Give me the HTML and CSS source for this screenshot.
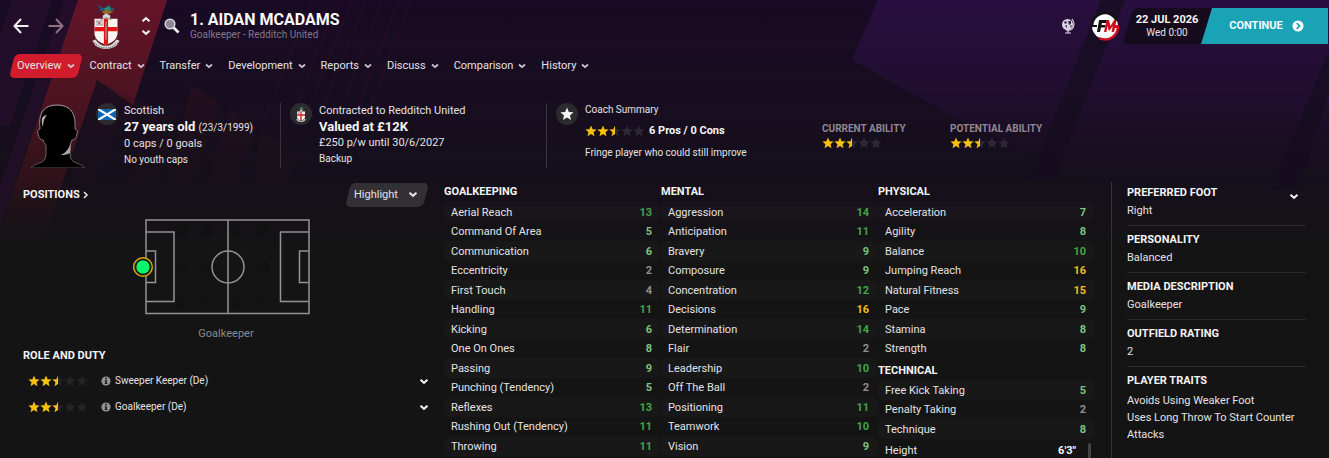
FILE: index.html
```
<!DOCTYPE html>
<html lang="en">
<head>
	<meta charset="UTF-8">
	<title>Aidan McAdams - Overview</title>
	<link rel="stylesheet" href="styles.css">
</head>
<body>

	<!-- shared icons -->
	<svg class="defs" aria-hidden="true">
		<symbol id="ic-chevron" viewBox="0 0 8 6"><path d="M1 1.5l3 2.6 3-2.6" fill="none" stroke="currentColor" stroke-width="1.8"/></symbol>
		<symbol id="ic-info" viewBox="0 0 10 10"><circle cx="5" cy="5" r="4.6" fill="#929292"/><path d="M4.2 1.8h1.6v1.4H4.2zM3.8 4.2h2v3h.6v.9H3.7v-.9h.5V5h-.4z" fill="#141414"/></symbol>
		<symbol id="ic-star" viewBox="0 0 24 24"><path d="M12 1l3.2 7.4 8 .7-6.1 5.3 1.9 7.9L12 18.1l-7 4.2 1.9-7.9L.8 9.1l8-.7z"/></symbol>
		<symbol id="rating" viewBox="0 0 60 12">
			<g fill="#f5c010"><use href="#ic-star" x="0" width="12" height="12"/><use href="#ic-star" x="12" width="12" height="12"/></g>
			<g fill="currentColor"><use href="#ic-star" x="24" width="12" height="12"/><use href="#ic-star" x="36" width="12" height="12"/><use href="#ic-star" x="48" width="12" height="12"/></g>
			<path d="M30 .5v8.6l-3.5 2.1 1-4-3.1-2.6 4-.4z" fill="#f5c010"/>
		</symbol>
		<symbol id="crest" viewBox="0 0 26 44">
			<path d="M4 1l5 3 4 1 3-4 2 4 5-1-6 4-3 2-4-2-5-1 3-1z" fill="#20547c"/>
			<path d="M11 5l5-2 2 3-4 3z" fill="#258b72"/><path d="M9 9l4-3 3 2 5-1-4 3-4 1z" fill="#9b6a25"/>
			<path d="M10 12l3-2 4 2v3h-7z" fill="#d6d6d6"/>
			<path d="M2 15h22v15q-1 7-11 10Q3 37 2 30z" fill="#f7f4f2"/>
			<path d="M11 15h4v25h-4zM2 23h22v4H2z" fill="#e41516"/>
			<path d="M3 16h8v6H3z" fill="#d5cdce"/><path d="M4 17l5 4M8 17l-3 4" stroke="#79616a" stroke-width=".8"/>
			<path d="M13 18v17M8 16l5-2 5 2" fill="none" stroke="#999" stroke-width="1.2"/>
			<path d="M0 36l3-1q4 6 10 6t10-6l3 1-3 5q-4 3-10 3T3 41z" fill="#d8d8d8"/>
			<path d="M2 38q4 5 11 5t11-5" fill="none" stroke="#555" stroke-width="1" stroke-dasharray="1 1"/>
		</symbol>
	</svg>

	<!-- backdrop -->
	<svg class="backdrop" viewBox="0 0 1329 260" preserveAspectRatio="none" aria-hidden="true">
		<defs>
			<linearGradient id="red" gradientUnits="userSpaceOnUse" x1="0" y1="0" x2="0" y2="255"><stop stop-color="#651429"/><stop offset=".4" stop-color="#4c1321"/><stop offset=".7" stop-color="#2f1219"/><stop offset="1" stop-color="#141414" stop-opacity="0"/></linearGradient>
			<linearGradient id="purple" gradientUnits="userSpaceOnUse" x1="0" y1="0" x2="0" y2="200"><stop stop-color="#280e3e"/><stop offset=".5" stop-color="#200e2e"/><stop offset="1" stop-color="#160f1c" stop-opacity="0"/></linearGradient>
			<linearGradient id="dim" gradientUnits="userSpaceOnUse" x1="0" y1="60" x2="0" y2="235"><stop stop-color="#37101f"/><stop offset="1" stop-color="#141414" stop-opacity="0"/></linearGradient>
		</defs>
		<path d="M12 0h40L10 126H0V36zM64 0h14L0 225v-40z" fill="#2b1031" opacity=".5"/>
		<path d="M78 0h89l-34 105-36-25L40 250H0v-20z" fill="url(#red)"/>
		<path d="M97 80l80 40-38 118h-30l35-105-24-12-38 100H58z" fill="url(#dim)" opacity=".4"/>
		<path d="M192 85l28 19-42 130h-30zM230 108l26 19-34 107h-30zM262 130l34 24-25 80h-30z" fill="url(#dim)" opacity=".6"/>
		<path d="M312 0l-48 120M338 0l-48 120M352 0l-44 110M366 0l-44 110M382 0l-42 110M399 0l-42 110M411 0l-42 110" stroke="#5a1534" stroke-width="1" opacity=".35" fill="none"/>
		<path d="M878 0h451v190h-230L960 120l-108-60z" fill="url(#purple)"/>
		<path d="M1101 0h24l-72 180h-24zM1329 50v42l-32 98h-26z" fill="#160d20" opacity=".75"/>
	</svg>

	<header class="header">
		<div class="header-nav">
			<button type="button" class="btn-icon" aria-label="Back"><svg width="16" height="16" viewBox="0 0 16 16"><path d="M15.500 8H1.500M8 1L1.500 8 8 15" fill="none" stroke="#f2eef2" stroke-width="2"/></svg></button>
			<button type="button" class="btn-icon" aria-label="Forward"><svg width="16" height="16" viewBox="0 0 16 16"><path d="M.5 8h14M8 1l6.500 7L8 15" fill="none" stroke="#8d7284" stroke-width="2"/></svg></button>
		</div>
		<svg class="header-crest"><use href="#crest"/></svg>
		<div class="header-step">
			<button type="button" class="btn-icon" aria-label="Previous player"><svg class="flip" width="10" height="7"><use href="#ic-chevron"/></svg></button>
			<button type="button" class="btn-icon" aria-label="Next player"><svg width="10" height="7"><use href="#ic-chevron"/></svg></button>
		</div>
		<button type="button" class="btn-icon header-search" aria-label="Search"><svg width="16" height="16" viewBox="0 0 16 16"><path d="M9.500 9.500l5 5" stroke="#f4f4f4" stroke-width="2.600"/><circle cx="6" cy="6" r="4.800" fill="#8b8794" stroke="#d8d5dc" stroke-width="1.500"/></svg></button>
		<div class="header-title">
			<h1>1. AIDAN MCADAMS</h1>
			<p>Goalkeeper - Redditch United</p>
		</div>
		<div class="header-tools">
			<button type="button" class="btn-icon" aria-label="World"><svg width="14" height="16" viewBox="0 0 14 16"><circle cx="6.500" cy="6.500" r="5.500" fill="#d9d5df"/><path d="M3 4l2-1 1 2-2 1zM7 3h3v3L8 7zM4 8l2-1v3zM9 8l2-1-1 3z" fill="#3a2850"/><path d="M11 1q4 5 0 10-3 2-6 1M7 12v3M4 15h6" fill="none" stroke="#d9d5df" stroke-width="1.200"/></svg></button>
			<button type="button" class="btn-icon" aria-label="FM menu"><svg width="30" height="30" viewBox="0 0 30 30">
				<circle cx="15" cy="15" r="13" fill="#fff"/>
				<path d="M2 15A13 13 0 0 1 27 10" fill="none" stroke="#111" stroke-width="2.500"/>
				<path d="M28 15A13 13 0 0 1 9 27" fill="none" stroke="#d0101e" stroke-width="2.500"/>
				<path d="M1 15h6" stroke="#111" stroke-width="2"/><path d="M7 21L9 9h8l-1 3h-4l-.5 2h4l-.5 2.500h-4L10 21z" fill="#111"/>
				<path d="M14 21l2.500-12H19l1.500 6L24 9h2.500l-1 5H29v3h-4l-1 4h-2.500l1.200-6-3 4.500h-1l-1.200-4.500L16.500 21z" fill="#d0101e"/>
			</svg></button>
			<div class="date"><strong>22 JUL 2026</strong><span>Wed 0:00</span></div>
			<button type="button" class="btn-continue">CONTINUE
				<svg width="12" height="12" viewBox="0 0 12 12"><circle cx="6" cy="6" r="5.500" fill="#fff"/><path d="M4.700 3.200L7.500 6 4.700 8.800" fill="none" stroke="#19a3b4" stroke-width="1.700"/></svg>
			</button>
		</div>
	</header>

	<nav class="tabs">
		<a href="#" class="on">Overview<svg><use href="#ic-chevron"/></svg></a>
		<a href="#">Contract<svg><use href="#ic-chevron"/></svg></a>
		<a href="#">Transfer<svg><use href="#ic-chevron"/></svg></a>
		<a href="#">Development<svg><use href="#ic-chevron"/></svg></a>
		<a href="#">Reports<svg><use href="#ic-chevron"/></svg></a>
		<a href="#">Discuss<svg><use href="#ic-chevron"/></svg></a>
		<a href="#">Comparison<svg><use href="#ic-chevron"/></svg></a>
		<a href="#">History<svg><use href="#ic-chevron"/></svg></a>
	</nav>

	<section class="summary">
		<div class="summary-item player">
			<svg class="photo" viewBox="0 0 60 64">
				<defs><linearGradient id="rim" x1="0" y1="0" x2="0" y2="1"><stop stop-color="#a9a3a6"/><stop offset="1" stop-color="#574b50"/></linearGradient></defs>
				<path d="M3 64q2-3 11-6 4-2 4-7V42q-2-4-3-6-4 0-5-6-1-5 2-5Q9 1 29 1q20 0 18 24 3 0 2 5-1 6-5 6-1 3-2 6v9q0 5 4 7 9 3 11 6z" fill="#000" stroke="url(#rim)" stroke-width="1"/>
				<path d="M14 14q2-3 5-3-4 4-4 12-2-4-1-9z" fill="#b5afb2"/>
				<path d="M43 38q-2 9-10 13 6 0 9-2z" fill="#aaa5a8"/>
			</svg>
			<span class="badge"><svg width="18" height="11" viewBox="0 0 18 11"><path fill="#0a66b2" d="M0 0h18v11H0z"/><path d="M0 0l18 11M18 0L0 11" stroke="#fff" stroke-width="2.200"/></svg></span>
			<div class="lines">
				<p>Scottish</p>
				<p class="big"><strong>27 years old</strong> <small>(23/3/1999)</small></p>
				<p>0 caps / 0 goals</p>
				<p class="small">No youth caps</p>
			</div>
		</div>
		<div class="summary-item">
			<span class="badge"><svg width="10" height="16"><use href="#crest"/></svg></span>
			<div class="lines">
				<p>Contracted to Redditch United</p>
				<p class="big"><strong>Valued at £12K</strong></p>
				<p>£250 p/w until 30/6/2027</p>
				<p class="small">Backup</p>
			</div>
		</div>
		<div class="summary-item coach">
			<span class="badge"><svg width="14" height="14" fill="#f4f4f4"><use href="#ic-star"/></svg></span>
			<div class="lines">
				<p class="small">Coach Summary</p>
				<p class="pros"><svg class="stars"><use href="#rating"/></svg><strong>6 Pros / 0 Cons</strong></p>
				<p class="small">Fringe player who could still improve</p>
			</div>
		</div>
		<div class="ability">
			<h2>CURRENT ABILITY</h2>
			<svg class="stars"><use href="#rating"/></svg>
		</div>
		<div class="ability">
			<h2>POTENTIAL ABILITY</h2>
			<svg class="stars"><use href="#rating"/></svg>
		</div>
	</section>

	<main class="main">
		<section class="positions">
			<div class="positions-head">
				<h2><a href="#">POSITIONS <svg width="6" height="8" viewBox="0 0 6 8"><path d="M1 1l3 3-3 3" fill="none" stroke="#e8e8e8" stroke-width="1.500"/></svg></a></h2>
				<div class="dropdown">
					<select aria-label="Highlight"><option>Highlight</option></select>
					<svg width="10" height="7"><use href="#ic-chevron"/></svg>
				</div>
			</div>
			<svg class="pitch" width="178" height="98" viewBox="0 0 178 98">
				<g fill="#111" opacity=".6"><circle cx="49" cy="13" r="6"/><circle cx="74" cy="13" r="6"/><circle cx="103" cy="13" r="6"/><circle cx="130" cy="13" r="6"/><circle cx="49" cy="49" r="6"/><circle cx="74" cy="49" r="6"/><circle cx="130" cy="49" r="6"/><circle cx="49" cy="85" r="6"/><circle cx="74" cy="85" r="6"/><circle cx="103" cy="85" r="6"/><circle cx="130" cy="85" r="6"/></g>
				<g fill="none" stroke="#949294" stroke-width="1.500">
					<path d="M13 2h163v93.500H13zM95 2v93.500M13 14h28v69.500H13M13 33h9.500v31.500H13M176 14h-28.500v69.500H176M176 33h-9.500v31.500H176"/>
					<circle cx="95" cy="49" r="16"/>
				</g>
				<circle cx="10" cy="49" r="9.300" fill="#181614" stroke="#d8a60a" stroke-width="1.500"/>
				<circle cx="10" cy="49" r="6.700" fill="#08f56c"/>
			</svg>
			<p class="pitch-label">Goalkeeper</p>

			<h2>ROLE AND DUTY</h2>
			<ul class="roles">
				<li><svg class="stars"><use href="#rating"/></svg><svg class="info"><use href="#ic-info"/></svg><span>Sweeper Keeper (De)</span>
					<button type="button" class="btn-icon" aria-label="Expand Sweeper Keeper"><svg width="10" height="7"><use href="#ic-chevron"/></svg></button></li>
				<li><svg class="stars"><use href="#rating"/></svg><svg class="info"><use href="#ic-info"/></svg><span>Goalkeeper (De)</span>
					<button type="button" class="btn-icon" aria-label="Expand Goalkeeper"><svg width="10" height="7"><use href="#ic-chevron"/></svg></button></li>
			</ul>
		</section>

		<section class="attributes">
			<div class="attr-col">
				<h2 id="h-gk">GOALKEEPING</h2>
				<table aria-labelledby="h-gk">
					<tr><th>Aerial Reach</th><td class="good">13</td></tr>
					<tr><th>Command Of Area</th><td class="mid">5</td></tr>
					<tr><th>Communication</th><td class="mid">6</td></tr>
					<tr><th>Eccentricity</th><td>2</td></tr>
					<tr><th>First Touch</th><td>4</td></tr>
					<tr><th>Handling</th><td class="good">11</td></tr>
					<tr><th>Kicking</th><td class="mid">6</td></tr>
					<tr><th>One On Ones</th><td class="mid">8</td></tr>
					<tr><th>Passing</th><td class="mid">9</td></tr>
					<tr><th>Punching (Tendency)</th><td class="mid">5</td></tr>
					<tr><th>Reflexes</th><td class="good">13</td></tr>
					<tr><th>Rushing Out (Tendency)</th><td class="good">11</td></tr>
					<tr><th>Throwing</th><td class="good">11</td></tr>
				</table>
			</div>
			<div class="attr-col">
				<h2 id="h-mental">MENTAL</h2>
				<table aria-labelledby="h-mental">
					<tr><th>Aggression</th><td class="good">14</td></tr>
					<tr><th>Anticipation</th><td class="good">11</td></tr>
					<tr><th>Bravery</th><td class="mid">9</td></tr>
					<tr><th>Composure</th><td class="mid">9</td></tr>
					<tr><th>Concentration</th><td class="good">12</td></tr>
					<tr><th>Decisions</th><td class="top">16</td></tr>
					<tr><th>Determination</th><td class="good">14</td></tr>
					<tr><th>Flair</th><td>2</td></tr>
					<tr><th>Leadership</th><td class="good">10</td></tr>
					<tr><th>Off The Ball</th><td>2</td></tr>
					<tr><th>Positioning</th><td class="good">11</td></tr>
					<tr><th>Teamwork</th><td class="good">10</td></tr>
					<tr><th>Vision</th><td class="mid">9</td></tr>
				</table>
			</div>
			<div class="attr-col">
				<h2 id="h-physical">PHYSICAL</h2>
				<table aria-labelledby="h-physical">
					<tr><th>Acceleration</th><td class="mid">7</td></tr>
					<tr><th>Agility</th><td class="mid">8</td></tr>
					<tr><th>Balance</th><td class="good">10</td></tr>
					<tr><th>Jumping Reach</th><td class="top">16</td></tr>
					<tr><th>Natural Fitness</th><td class="top">15</td></tr>
					<tr><th>Pace</th><td class="mid">9</td></tr>
					<tr><th>Stamina</th><td class="mid">8</td></tr>
					<tr><th>Strength</th><td class="mid">8</td></tr>
				</table>
				<h2 id="h-tech" class="next">TECHNICAL</h2>
				<table aria-labelledby="h-tech">
					<tr><th>Free Kick Taking</th><td class="mid">5</td></tr>
					<tr><th>Penalty Taking</th><td>2</td></tr>
					<tr><th>Technique</th><td class="mid">8</td></tr>
				</table>
				<div class="height"><span>Height</span><strong>6'3"</strong><i></i></div>
			</div>
		</section>

		<aside class="facts">
			<div class="fact">
				<h2>PREFERRED FOOT</h2><p>Right</p>
				<button type="button" class="btn-icon" aria-label="More"><svg width="10" height="7"><use href="#ic-chevron"/></svg></button>
			</div>
			<div class="fact"><h2>PERSONALITY</h2><p>Balanced</p></div>
			<div class="fact"><h2>MEDIA DESCRIPTION</h2><p>Goalkeeper</p></div>
			<div class="fact"><h2>OUTFIELD RATING</h2><p>2</p></div>
			<div class="fact traits"><h2>PLAYER TRAITS</h2><p>Avoids Using Weaker Foot</p><p>Uses Long Throw To Start Counter Attacks</p></div>
		</aside>
	</main>

</body>
</html>
```
FILE: styles.css
```
*{ box-sizing: border-box; }
html{ background: #141414; }
body{
	position: relative;
	isolation: isolate;
	height: 100vh;
	overflow: hidden;
	background: linear-gradient(#1a0a25 0, #170d20 90px, #150f1a 180px, #141414 250px);
	color: #e4e2e4;
	font-family: Roboto, "Liberation Sans", sans-serif;
	font-size: 11px;
	line-height: 16px;
}
body, h1, h2, p, ul{ margin: 0; padding: 0; }
ul{ list-style: none; }
a{ color: inherit; text-decoration: none; }
svg{ display: block; flex: none; }
h2{ color: #f4f4f4; font-size: 11px; font-weight: bold; line-height: 20px; }
strong{ color: #f6f6f6; }
button, select{
	border: 0;
	padding: 0;
	background: none;
	color: inherit;
	font: inherit;
}
.defs{ position: absolute; width: 0; height: 0; }
.backdrop{
	position: absolute;
	top: 0;
	left: 0;
	z-index: -2;
	width: 100%;
	height: 260px;
}
.btn-icon{ display: block; color: #f0f0f0; }
.flip{ transform: scaleY(-1); }
.stars{ width: 60px; height: 12px; color: #2d2736; }

/* header */
.header{
	display: flex;
	align-items: center;
	height: 52px;
	padding-left: 13px;
}
.header-nav{ display: flex; gap: 19px; }
.header-crest{ width: 28px; height: 46px; margin-left: 28px; }
.header-step{ margin-left: 21px; }
.header-step .btn-icon + .btn-icon{ margin-top: 6px; }
.header-search{ margin-left: 13px; }
.header-title{ margin-left: 10px; }
.header-title h1{ color: #f8f8f8; font-size: 16px; line-height: 17px; }
.header-title p{ color: #817889; font-size: 10px; line-height: 13px; }
.header-tools{ display: flex; align-items: center; margin-left: auto; padding-right: 1px; }
.header-tools .btn-icon + .btn-icon{ margin-left: 15px; }
.date{
	position: relative;
	width: 88px;
	height: 36px;
	margin-left: 3px;
	padding-top: 5px;
	text-align: center;
	line-height: 13px;
}
.date:before{
	content: '';
	position: absolute;
	inset: 0 0 0 5px;
	z-index: -1;
	background: #150b1d;
	border-radius: 5px 0 0 5px;
	transform: skewX(-17deg);
}
.date strong{ display: block; font-size: 11px; }
.date span{ font-size: 10px; }
.btn-continue{
	display: flex;
	align-items: center;
	justify-content: center;
	gap: 9px;
	width: 127px;
	height: 36px;
	margin-left: -10px;
	padding-left: 4px;
	background: #19a3b4;
	color: #f4fbfc;
	font-weight: bold;
	clip-path: polygon(11px 0, 100% 0, 100% 100%, 0 100%);
}

/* tabs */
.tabs{
	display: flex;
	gap: 15px;
	padding: 2px 17px 0;
	line-height: 24px;
}
.tabs a{ position: relative; display: flex; align-items: center; gap: 5px; }
.tabs svg{ width: 8px; height: 6px; color: #cfc6cf; }
.tabs .on:before{
	content: '';
	position: absolute;
	inset: 0 -5px;
	z-index: -1;
	background: #d01c2d;
	border-radius: 5px;
	transform: skewX(-14deg);
}

/* summary */
.summary{
	display: grid;
	grid-template-columns: 280fr 266fr 276fr 128fr 379fr;
	margin-top: 25px;
}
.summary-item{ display: flex; height: 65px; padding-left: 9px; }
.summary-item + .summary-item{ border-left: 1px solid #3a333e; }
.summary-item.player{ padding-left: 28px; }
.photo{ width: 60px; height: 64px; margin: 1px 8px 0 0; }
.badge{
	display: flex;
	align-items: center;
	justify-content: center;
	flex: none;
	width: 22px;
	height: 22px;
	margin: 0 7px 0 0;
	border-radius: 50%;
	background: #2b2b2d;
}
.player .badge{ margin-right: 6px; }
.lines .big{ font-size: 13px; }
.lines .big small{ font-size: 10px; }
.lines .small{ font-size: 10px; }
.coach .lines{ margin-top: -1px; }
.lines .pros{ display: flex; align-items: center; gap: 4px; margin: 5px 0 6px; }
.ability{ padding-top: 18px; }
.ability h2{ color: #8e8794; font-size: 10px; line-height: 16px; }

/* main */
.main{
	display: grid;
	grid-template-columns: 421fr 650fr 212fr;
	margin-top: 14px;
	padding: 0 23px;
}
.positions{ padding-right: 15px; }
.positions-head{ display: flex; justify-content: space-between; align-items: center; height: 25px; }
.positions-head a{ display: flex; align-items: center; gap: 3px; }
.dropdown{ position: relative; display: flex; align-items: center; width: 84px; height: 24px; }
.dropdown:before{
	content: '';
	position: absolute;
	inset: 0 3px;
	background: #323035;
	border-radius: 5px;
	transform: skewX(-14deg);
}
.dropdown select{
	position: relative;
	width: 100%;
	height: 24px;
	padding-left: 9px;
	appearance: none;
}
.dropdown svg{ position: absolute; right: 11px; pointer-events: none; }
.pitch{ margin: 11px auto 0 110px; }
.pitch-label{ margin: 10px 0 4px; color: #8b898b; text-align: center; }
.roles{ margin-top: 1px; }
.roles li{ display: flex; align-items: center; height: 26px; padding: 2px 0 0 5px; font-size: 10px; }
.roles .stars{ color: #242424; }
.roles .info{ width: 10px; height: 10px; margin: 0 4px 0 13px; }
.roles .btn-icon{ margin-left: auto; }

.attributes{ display: grid; grid-template-columns: repeat(3, 1fr); gap: 1px; }
.attr-col table{ width: 100%; border-collapse: separate; border-spacing: 0; }
.attr-col tr{ height: 19px; }
.attr-col tr:nth-child(odd){ height: 20px; }
.attr-col th, .attr-col td{ padding: 0; line-height: 19px; }
.attr-col th{ padding-left: 7px; text-align: left; font-weight: normal; }
.attr-col td{ padding-right: 8px; text-align: right; color: #8f8f8f; font-weight: bold; }
.attr-col tr:nth-child(odd) > *{ background: rgba(255, 255, 255, .02); }
.attr-col th{ border-radius: 5px 0 0 5px; }
.attr-col td{ border-radius: 0 5px 5px 0; }
.attr-col td.mid{ color: #7cc47f; }
.attr-col td.good{ color: #43a447; }
.attr-col td.top{ color: #f2bb24; }
.attr-col .next{ margin-top: 3px; line-height: 19px; }
.height{ display: flex; margin-top: 4px; padding: 0 3px 0 7px; }
.height strong{ margin-left: auto; }
.height i{ width: 3px; margin-left: 12px; background: #444; border-radius: 2px; }

.facts{ margin-left: 17px; padding-left: 15px; border-left: 1px solid #343238; }
.fact{ position: relative; height: 44px; margin-bottom: 3px; border-bottom: 1px solid #2b2a2e; }
.fact h2{ padding-top: 2px; line-height: 18px; }
.fact p{ line-height: 17px; }
.fact.traits{ height: auto; border: 0; }
.fact .btn-icon{ position: absolute; top: 11px; right: 7px; }
.traits h2{ margin-bottom: 2px; }
```
